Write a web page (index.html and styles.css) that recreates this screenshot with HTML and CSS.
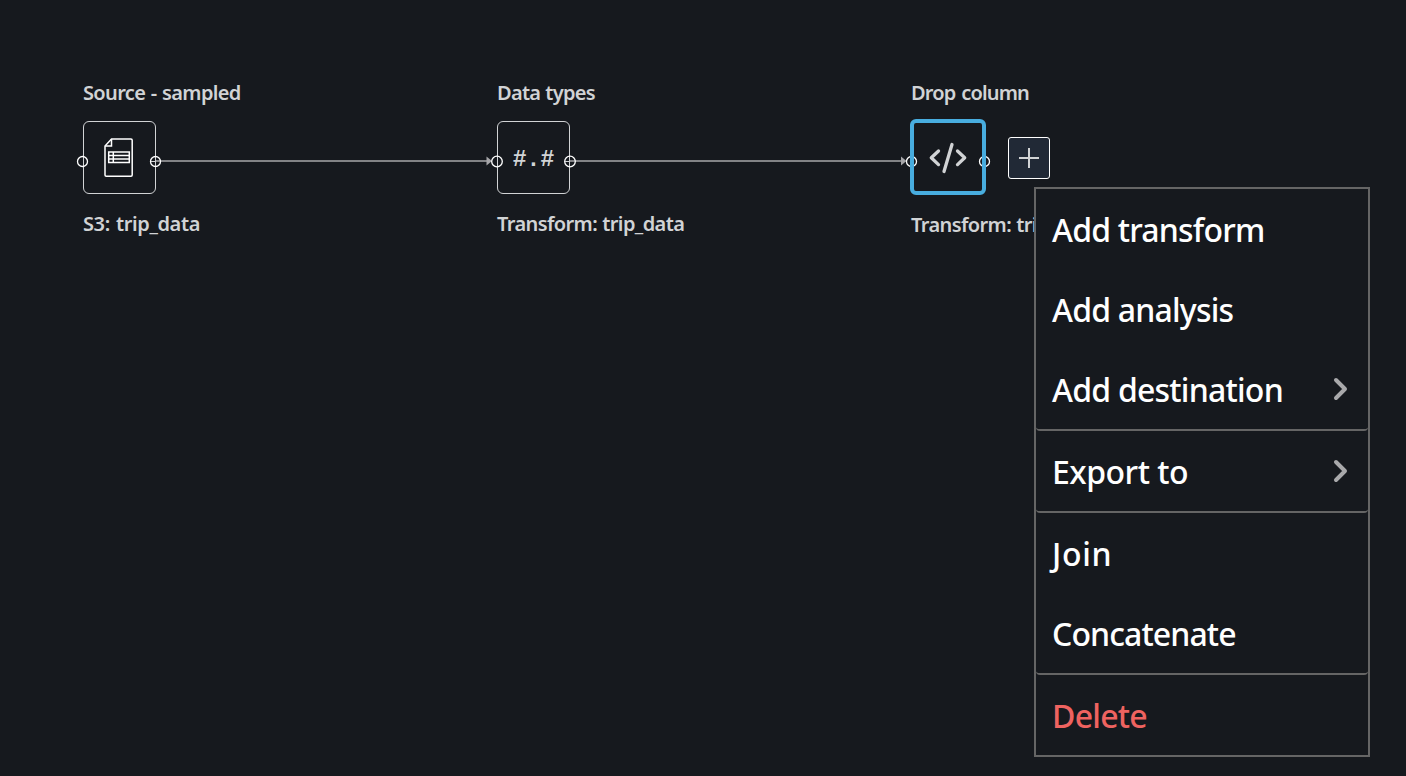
FILE: index.html
```html
<!DOCTYPE html>
<html lang="en">
<head>
<meta charset="utf-8">
<title>Data flow</title>
<link rel="stylesheet" href="styles.css">
</head>
<body>
<main class="canvas">
  <svg class="edges" width="1406" height="776" viewBox="0 0 1406 776" fill="none">
    <path d="M156 161H488M570 161H902" stroke="#a6a6a9" stroke-width="1.700"/>
    <path d="M486.500 156.500L492 161L486.500 165.500ZM901 156.500L906.500 161L901 165.500Z" fill="#a6a6a9"/>
  </svg>

  <section class="node node-source">
    <h2 class="node-title"><span class="t-source">Source - sampled</span></h2>
    <div class="node-box">
      <svg class="icon-file" width="30" height="40" viewBox="0 0 30 40" fill="none" stroke="#fff" stroke-width="1.500">
        <path d="M7.500 1H27q1.200 0 1.200 1.200V37q0 1.200-1.200 1.200H2.200Q1 38.200 1 37V8Z"/>
        <path d="M7.500 1V8H1"/>
        <path d="M4.700 14H25.300V24.500H4.700ZM9.300 14V24.500M4.700 17.500H25.300M4.700 21H25.300"/>
      </svg>
    </div>
    <p class="node-label"><span class="t-s3">S3: trip_data</span></p>
  </section>

  <section class="node node-types">
    <h2 class="node-title"><span class="t-types">Data types</span></h2>
    <div class="node-box"><span class="glyph">#.#</span></div>
    <p class="node-label"><span class="t-trip">Transform: trip_data</span></p>
  </section>

  <section class="node node-drop">
    <h2 class="node-title"><span class="t-drop">Drop column</span></h2>
    <div class="node-box selected">
      <svg class="icon-code" width="40" height="34" viewBox="0 0 40 34" fill="none" stroke="#d1d3d5" stroke-width="3.300" stroke-linecap="round" stroke-linejoin="round">
        <path d="M10.500 10L3.300 16.800L10.500 23.600M29.500 10L36.700 16.800L29.500 23.600M24 3.500L16 30.500"/>
      </svg>
    </div>
    <p class="node-label"><span class="t-trip">Transform: tri</span></p>
  </section>

  <svg class="edges" width="1406" height="776" viewBox="0 0 1406 776" fill="none">
    <g stroke="#fff" stroke-width="1.300">
      <circle cx="82.500" cy="161.500" r="5"/>
      <circle cx="155.500" cy="161.500" r="5"/>
      <circle cx="497" cy="161.500" r="5.300"/>
      <circle cx="570" cy="161.500" r="5.300"/>
      <circle cx="911.500" cy="161.500" r="5"/>
      <circle cx="984.500" cy="161.500" r="5"/>
    </g>
    <path d="M151 161.500H156M565 161.500H570" stroke="#d1d3d5" stroke-width="1.200"/>
    <path d="M912 154V169M984 154V169" stroke="#48addf" stroke-width="4"/>
  </svg>

  <button class="add" aria-label="Add">
    <svg width="20" height="20" viewBox="0 0 20 20" stroke="#d1d3d5" stroke-width="2"><path d="M10 0V20M0 10H20"/></svg>
  </button>

  <nav class="menu">
    <div class="group">
      <a class="item"><span class="m-transform">Add transform</span></a>
      <a class="item"><span class="m-analysis">Add analysis</span></a>
      <a class="item"><span class="m-destination">Add destination</span><svg class="chevron" width="16" height="24" viewBox="0 0 16 24"><path d="M3 3L12 12L3 21"/></svg></a>
    </div>
    <div class="group">
      <a class="item"><span class="m-export">Export to</span><svg class="chevron" width="16" height="24" viewBox="0 0 16 24"><path d="M3 3L12 12L3 21"/></svg></a>
    </div>
    <div class="group">
      <a class="item"><span class="m-join">Join</span></a>
      <a class="item"><span class="m-concat">Concatenate</span></a>
    </div>
    <div class="group">
      <a class="item danger"><span class="m-delete">Delete</span></a>
    </div>
  </nav>
</main>
</body>
</html>
```

FILE: styles.css
```css
* { box-sizing: border-box; }
body { margin: 0; background: #16191e; }
.canvas {
  position: relative;
  width: 1406px;
  height: 776px;
  overflow: hidden;
  background: #16191e;
  color: #d1d3d5;
  font-family: "Noto Sans", sans-serif;
}
.edges { position: absolute; left: 0; top: 0; }
.node { position: absolute; top: 79px; display: flex; flex-direction: column; align-items: flex-start; }
.node-source { left: 83px; }
.node-types { left: 497px; }
.node-drop { left: 911px; }
.node-title, .node-label {
  margin: 0;
  font-size: 20px;
  line-height: 28px;
  font-weight: 600;
  white-space: nowrap;
}
.node-title { margin-bottom: 14px; }
.node-label { margin-top: 16px; }
.t-source { letter-spacing: -0.65px; word-spacing: 1px; }
.t-types { letter-spacing: -0.7px; word-spacing: 0.5px; }
.t-drop { letter-spacing: -0.85px; word-spacing: 1.5px; }
.t-s3 { letter-spacing: -0.4px; word-spacing: 1.5px; }
.t-trip { letter-spacing: -0.6px; word-spacing: 0.5px; }
.node-box {
  width: 73px;
  height: 73px;
  border: 1px solid #d1d3d5;
  border-radius: 6px;
  display: flex;
  align-items: center;
  justify-content: center;
}
.icon-file { margin-right: 2px; }
.icon-code { margin-top: 2px; }
.node-box.selected { width: 76px; height: 76px; margin: -2px -1px -1px; border: 4px solid #48addf; }
.node-drop .node-label { margin-top: 17px; }
.glyph { padding-top: 5px; font: bold 23px/30px "Liberation Mono", monospace; }
.add {
  position: absolute;
  left: 1008px;
  top: 137px;
  width: 42px;
  height: 42px;
  padding: 0;
  border: 1px solid #fff;
  border-radius: 3px;
  background: #212936;
  display: flex;
  align-items: center;
  justify-content: center;
}
.menu {
  position: absolute;
  left: 1034px;
  top: 187px;
  width: 336px;
  height: 570px;
  border: 2px solid #656565;
  background: #16191e;
  color: #fff;
}
.group { border-bottom: 2px solid #656565; border-radius: 0 0 4px 4px; }
.group:last-child { border-bottom: 0; }
.item {
  display: flex;
  align-items: center;
  justify-content: space-between;
  height: 80px;
  padding: 0 19px 0 16px;
  font-size: 32px;
  font-weight: 500;
  white-space: nowrap;
}
.m-transform { letter-spacing: -0.8px; }
.m-analysis { letter-spacing: -0.8px; }
.m-destination { letter-spacing: -0.77px; }
.m-export { letter-spacing: -0.5px; }
.m-join { letter-spacing: 0.7px; }
.m-concat { letter-spacing: -0.9px; }
.m-delete { letter-spacing: -0.75px; }
.chevron { margin-bottom: 1px; fill: none; stroke: #a9a9ab; stroke-width: 4; stroke-linecap: round; stroke-linejoin: round; }
.danger { color: #ef6360; }
```
